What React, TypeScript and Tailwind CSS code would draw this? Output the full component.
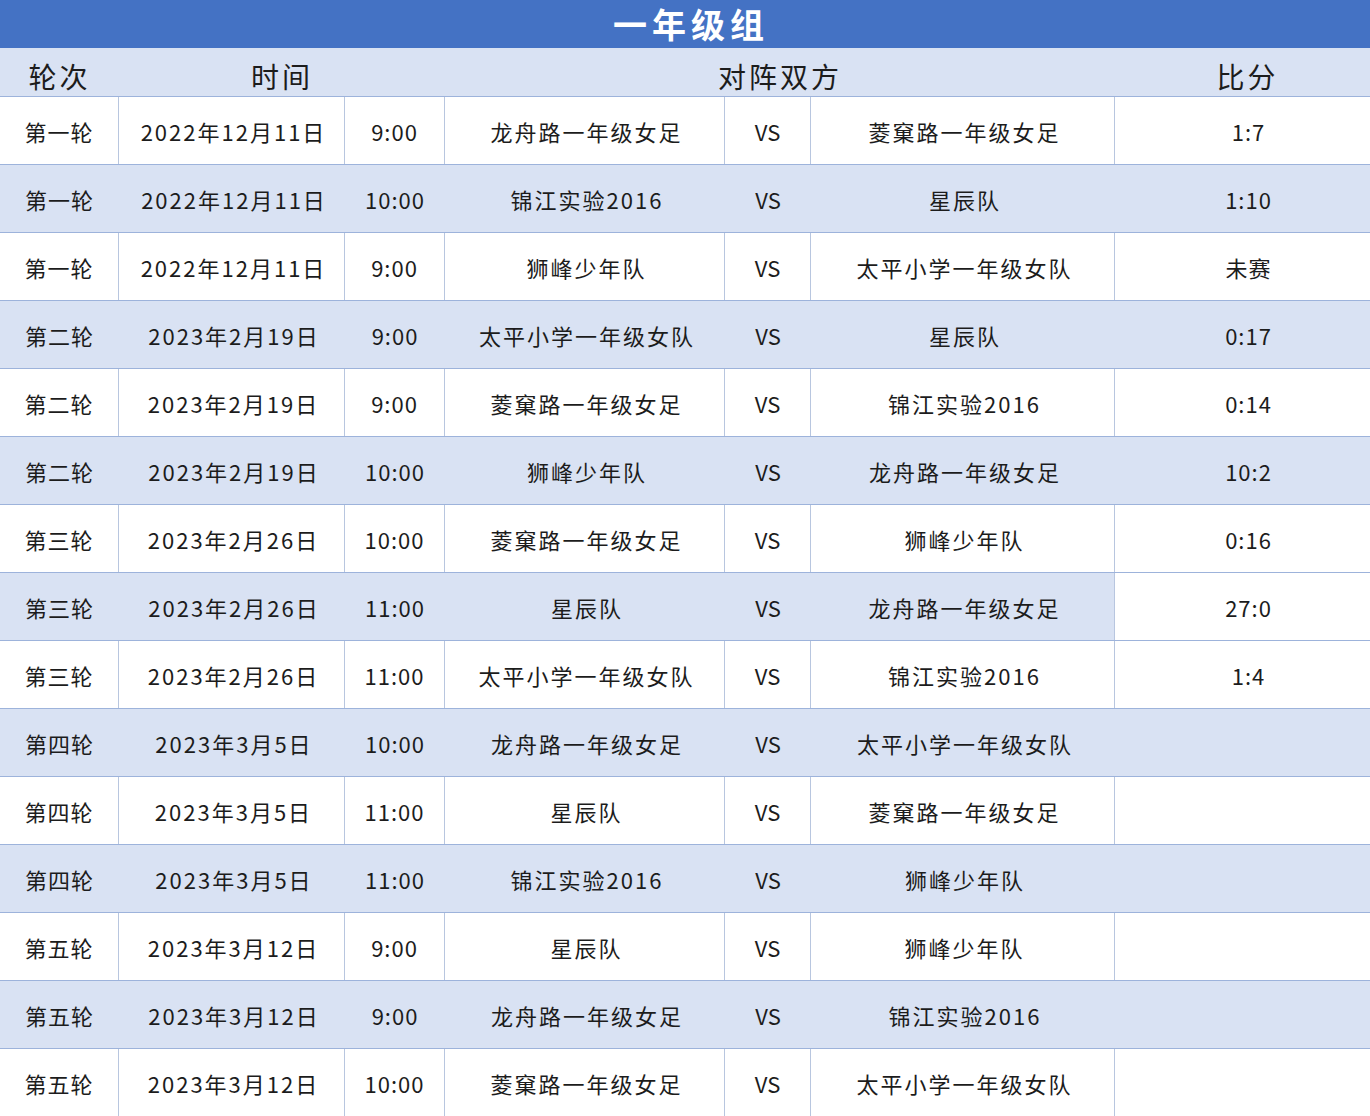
import React from 'react';

type Row = { round: string; date: string; time: string; home: string; away: string; score: string; mixed?: boolean };

const rows: Row[] = [
  { round: '第一轮', date: '2022年12月11日', time: '9:00', home: '龙舟路一年级女足', away: '菱窠路一年级女足', score: '1:7' },
  { round: '第一轮', date: '2022年12月11日', time: '10:00', home: '锦江实验2016', away: '星辰队', score: '1:10' },
  { round: '第一轮', date: '2022年12月11日', time: '9:00', home: '狮峰少年队', away: '太平小学一年级女队', score: '未赛' },
  { round: '第二轮', date: '2023年2月19日', time: '9:00', home: '太平小学一年级女队', away: '星辰队', score: '0:17' },
  { round: '第二轮', date: '2023年2月19日', time: '9:00', home: '菱窠路一年级女足', away: '锦江实验2016', score: '0:14' },
  { round: '第二轮', date: '2023年2月19日', time: '10:00', home: '狮峰少年队', away: '龙舟路一年级女足', score: '10:2' },
  { round: '第三轮', date: '2023年2月26日', time: '10:00', home: '菱窠路一年级女足', away: '狮峰少年队', score: '0:16' },
  { round: '第三轮', date: '2023年2月26日', time: '11:00', home: '星辰队', away: '龙舟路一年级女足', score: '27:0', mixed: true },
  { round: '第三轮', date: '2023年2月26日', time: '11:00', home: '太平小学一年级女队', away: '锦江实验2016', score: '1:4' },
  { round: '第四轮', date: '2023年3月5日', time: '10:00', home: '龙舟路一年级女足', away: '太平小学一年级女队', score: '' },
  { round: '第四轮', date: '2023年3月5日', time: '11:00', home: '星辰队', away: '菱窠路一年级女足', score: '' },
  { round: '第四轮', date: '2023年3月5日', time: '11:00', home: '锦江实验2016', away: '狮峰少年队', score: '' },
  { round: '第五轮', date: '2023年3月12日', time: '9:00', home: '星辰队', away: '狮峰少年队', score: '' },
  { round: '第五轮', date: '2023年3月12日', time: '9:00', home: '龙舟路一年级女足', away: '锦江实验2016', score: '' },
  { round: '第五轮', date: '2023年3月12日', time: '10:00', home: '菱窠路一年级女足', away: '太平小学一年级女队', score: '' },
];

const cols = 'grid grid-cols-[119px_226px_100px_280px_86px_304px_1fr]';

export default function App() {
  return (
    <div className="w-[1370px] h-[1116px] overflow-hidden bg-white text-[#1c1c1c]" style={{ fontFamily: '"Noto Sans CJK SC", "Noto Sans", sans-serif' }}>
      <div className="h-[48px] bg-[#4472c4] flex items-center justify-center pl-[12px] text-white text-[34px] font-bold tracking-[5px] leading-none">
        一年级组
      </div>
      <div className="h-[49px] bg-[#d9e2f3] border-b border-[#9db3db] grid grid-cols-[119px_326px_670px_1fr] text-[28px] tracking-[3px] leading-none">
        <div className="flex items-center justify-center pt-[8px]">轮次</div>
        <div className="flex items-center justify-center pt-[8px]">时间</div>
        <div className="flex items-center justify-center pt-[8px]">对阵双方</div>
        <div className="flex items-center justify-center pt-[8px] pl-[10px]">比分</div>
      </div>
      {rows.map((r, i) => {
        const blue = i % 2 === 1 || r.mixed;
        const cell = blue ? 'flex items-center justify-center' : 'flex items-center justify-center border-r border-[#b8c6df]';
        return (
          <div key={i} className={`${cols} h-[68px] border-b border-[#9db3db] text-[22px] leading-none ${blue ? 'bg-[#d9e2f3]' : 'bg-white'}`}>
            <div className={`${cell} tracking-[1px]`}>{r.round}</div>
            <div className={`${cell} tracking-[2px] pl-[4px]`}>{r.date}</div>
            <div className={`${cell} tracking-[1px]`}>{r.time}</div>
            <div className={`${cell} tracking-[2px] pl-[4px]`}>{r.home}</div>
            <div className={cell}>VS</div>
            <div className={`${r.mixed ? 'flex items-center justify-center border-r border-[#b8c6df]' : cell} tracking-[2px] pl-[4px]`}>{r.away}</div>
            <div className={`flex items-center justify-center tracking-[1px] pl-[12px] ${r.mixed ? 'bg-white' : ''}`}>{r.score}</div>
          </div>
        );
      })}
    </div>
  );
}
